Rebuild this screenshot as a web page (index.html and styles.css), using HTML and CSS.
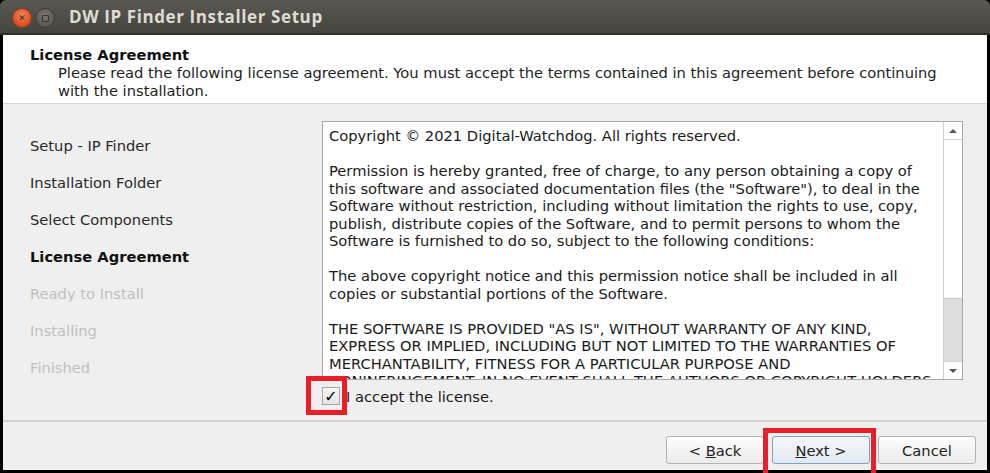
FILE: index.html
```html
<!DOCTYPE html>
<html>
<head>
<meta charset="utf-8">
<title>DW IP Finder Installer Setup</title>
<link rel="stylesheet" href="styles.css">
</head>
<body>

<div class="window">
  <div class="titlebar">
    <span class="wbtn wclose">&#x2715;</span>
    <span class="wbtn wmax"><i></i></span>
    <span class="wtitle">DW IP Finder Installer Setup</span>
  </div>

  <div class="frame">
    <div class="pagehead">
      <div class="headtitle">License Agreement</div>
      <div class="headsub">Please read the following license agreement. You must accept the terms contained in this agreement before continuing<br>with the installation.</div>
    </div>

    <div class="pagebody">
      <ul class="steps">
        <li>Setup - IP Finder</li>
        <li>Installation Folder</li>
        <li>Select Components</li>
        <li class="current">License Agreement</li>
        <li class="todo">Ready to Install</li>
        <li class="todo">Installing</li>
        <li class="todo">Finished</li>
      </ul>

      <div class="content">
        <div class="licensebox">
          <div class="licensetext">
            <p>Copyright &copy; 2021 Digital-Watchdog. All rights reserved.</p>
            <p>Permission is hereby granted, free of charge, to any person obtaining a copy of<br>
this software and associated documentation files (the "Software"), to deal in the<br>
Software without restriction, including without limitation the rights to use, copy,<br>
publish, distribute copies of the Software, and to permit persons to whom the<br>
Software is furnished to do so, subject to the following conditions:</p>
            <p>The above copyright notice and this permission notice shall be included in all<br>
copies or substantial portions of the Software.</p>
            <p>THE SOFTWARE IS PROVIDED "AS IS", WITHOUT WARRANTY OF ANY KIND,<br>
EXPRESS OR IMPLIED, INCLUDING BUT NOT LIMITED TO THE WARRANTIES OF<br>
MERCHANTABILITY, FITNESS FOR A PARTICULAR PURPOSE AND<br>
NONINFRINGEMENT. IN NO EVENT SHALL THE AUTHORS OR COPYRIGHT HOLDERS</p>
          </div>
          <div class="vscroll">
            <div class="sbtn"><span class="arrow up"></span></div>
            <div class="track"><div class="thumb"></div></div>
            <div class="sbtn"><span class="arrow down"></span></div>
          </div>
        </div>
        <label class="accept"><span class="checkbox">&#x2713;</span>I accept the license.</label>
      </div>
    </div>

    <div class="buttonrow">
      <button class="btn">&lt; <u>B</u>ack</button>
      <button class="btn default"><u>N</u>ext &gt;</button>
      <button class="btn">Cancel</button>
    </div>
  </div>

  <!-- red callouts drawn over the dialog -->
  <div class="callout callout-check"></div>
  <div class="callout callout-next"></div>
</div>

</body>
</html>
```

FILE: styles.css
```css
html, body { margin: 0; padding: 0; background: #000; }
body { width: 990px; height: 473px; overflow: hidden; font-family: "DejaVu Sans", sans-serif; font-size: 14.7px; color: #222; }

.window { position: relative; width: 990px; height: 473px; display: flex; flex-direction: column; }

/* title bar */
.titlebar { height: 33px; border-bottom: 2px solid #2f2e2b; border-radius: 6px 6px 0 0; background: linear-gradient(#5b5954, #45433e); display: flex; align-items: center; padding-left: 12px; }
.wbtn { flex: none; width: 20px; height: 20px; border-radius: 50%; box-sizing: border-box; display: flex; align-items: center; justify-content: center; margin-top: 3px; }
.wclose { background: radial-gradient(circle at 50% 35%, #f4865a, #de4a1c 70%); border: 1px solid #8c3a1c; color: #3d2b22; font-size: 9px; font-weight: bold; }
.wmax { margin-left: 3px; background: radial-gradient(circle at 50% 35%, #7a7873, #5a5853 70%); border: 1px solid #3a3936; }
.wmax i { width: 7px; height: 7px; box-sizing: border-box; border: 1px solid #36352f; border-radius: 1px; }
.wtitle { margin-left: 14px; font-family: "Open Sans", "DejaVu Sans", sans-serif; font-weight: bold; font-size: 17px; letter-spacing: 0.6px; color: #dfdbd2; }

/* dialog frame */
.frame { flex: 1; display: flex; flex-direction: column; border: 3px solid #000; border-top: 0; background: #efefef; }

.pagehead { height: 69px; box-sizing: border-box; padding: 11px 0 0 27px; background: #fff; border-bottom: 1px solid #d4d4d4; line-height: 18px; color: #1e1e1e; }
.headtitle { font-weight: bold; color: #111; }
.headsub { padding-left: 28px; white-space: nowrap; }

.pagebody { height: 316px; display: flex; border-bottom: 2px solid #d2d2d2; }

.steps { list-style: none; margin: 0; padding: 23px 0 0 27px; width: 319px; box-sizing: border-box; line-height: 37px; color: #2a2a2a; }
.steps li.current { font-weight: bold; color: #111; }
.steps li.todo { color: #c0c0c0; }

.content { padding-top: 17px; width: 641px; }
.licensebox { height: 259px; box-sizing: border-box; border: 1px solid #a9a9a9; background: #fff; display: flex; overflow: hidden; }
.licensetext { flex: 1; padding: 5px 0 0 6px; line-height: 17.5px; white-space: nowrap; overflow: hidden; color: #1a1a1a; }
.licensetext p { margin: 0 0 17.5px 0; }

.vscroll { width: 18px; border-left: 1px solid #cfcfcf; display: flex; flex-direction: column; background: #fff; }
.sbtn { height: 17px; display: flex; align-items: center; justify-content: center; border-bottom: 1px solid #d0d0d0; }
.sbtn:last-child { border-bottom: 0; border-top: 1px solid #d0d0d0; }
.arrow { width: 0; height: 0; border-left: 4px solid transparent; border-right: 4px solid transparent; }
.arrow.up { border-bottom: 4px solid #555; }
.arrow.down { border-top: 4px solid #555; }
.track { flex: 1; display: flex; flex-direction: column; justify-content: flex-end; }
.thumb { height: 62px; background: #dcdcdc; border-top: 1px solid #c4c4c4; }

.accept { display: flex; align-items: center; margin-top: 7px; height: 18px; color: #1a1a1a; }
.checkbox { width: 18px; height: 18px; box-sizing: border-box; border: 1px solid #a6a6a6; background: linear-gradient(#f6f6f6, #e4e4e4); display: flex; align-items: center; justify-content: center; font-size: 16px; font-weight: bold; color: #000; margin-right: 6px; }

/* bottom buttons */
.buttonrow { flex: 1; display: flex; justify-content: flex-end; align-items: flex-start; gap: 8px; padding: 14px 11px 0 0; }
.btn { width: 98px; height: 28px; border: 1px solid #b2b2b2; border-radius: 3px; background: linear-gradient(#fdfdfd, #ebebeb); font-family: "DejaVu Sans", sans-serif; font-size: 14.7px; color: #222; padding: 0; }
.btn.default { border-color: #7f9fc6; background: linear-gradient(#f5f8fb, #e2e9f1); }

/* red annotation boxes */
.callout { position: absolute; border: 5px solid #e81f27; box-sizing: border-box; }
.callout-check { left: 306px; top: 376px; width: 41px; height: 39px; }
.callout-next { left: 763px; top: 428px; width: 113px; height: 50px; }
```
